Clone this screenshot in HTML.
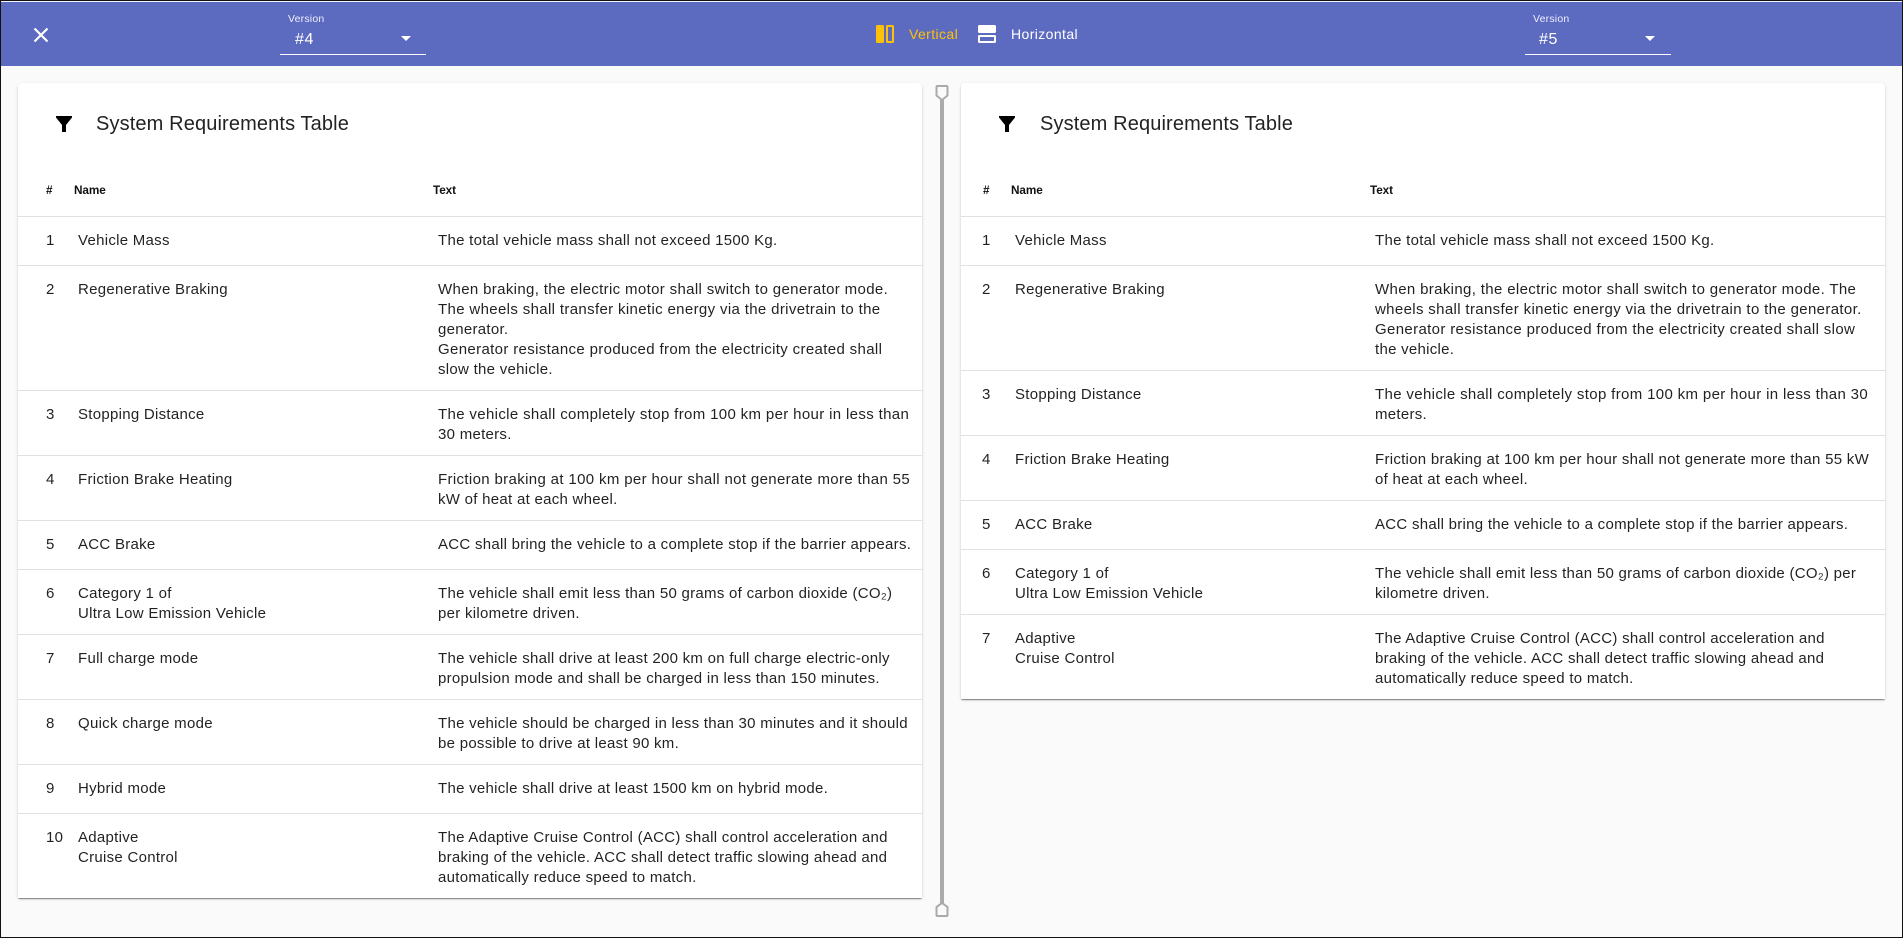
<!DOCTYPE html>
<html><head><meta charset="utf-8"><title>Compare</title>
<style>
*{box-sizing:border-box}
html,body{margin:0;padding:0}
body{width:1903px;height:938px;overflow:hidden;position:relative;background:#fafafa;font-family:"Liberation Sans",sans-serif;color:rgba(0,0,0,.87)}
.frame{position:absolute;left:0;top:0;width:1903px;height:938px;border:1px solid #111;z-index:9;pointer-events:none}
.bar{position:absolute;left:0;top:0;width:1903px;height:66px;background:#5c6bc0;color:#fff;border-top:2px solid #f4f5fb}
.bar>*{margin-top:-2px}
.abs{position:absolute;white-space:nowrap}
.lab{font-size:10.5px;line-height:12px;top:13px;letter-spacing:.2px;color:#eef}
.val{font-size:16px;line-height:20px;top:30px;letter-spacing:.6px}
.ul{position:absolute;top:54px;width:146px;height:1px;background:#fff}
.arr{position:absolute;top:36px;width:0;height:0;border-left:5px solid transparent;border-right:5px solid transparent;border-top:5px solid #fff}
.opt{font-size:14px;line-height:20px;top:24px;letter-spacing:.4px}
.card{position:absolute;top:83px;background:#fff;border-radius:4px 4px 0 0;box-shadow:0 2px 1px -1px rgba(0,0,0,.3),0 1px 1px 0 rgba(0,0,0,.2),0 1px 3px 0 rgba(0,0,0,.12)}
.title{position:absolute;top:28px;font-size:20px;line-height:26px;letter-spacing:.13px;white-space:nowrap;color:rgba(0,0,0,.87)}
.hd{position:absolute;top:100px;font-size:12px;line-height:14px;font-weight:700;color:#111;letter-spacing:-.1px;white-space:nowrap;transform:scaleX(.98);transform-origin:left}
.r{position:absolute;left:0;width:100%;border-bottom:1px solid #e0e0e0}
.c{position:absolute;top:14px;font-size:15px;line-height:20px;letter-spacing:.28px;white-space:nowrap}
.w{letter-spacing:.35px}
</style></head><body>
<div class="bar">
<svg class="abs" style="left:32px;top:26px" width="18" height="18" viewBox="0 0 18 18"><path d="M2.5 2.5L15.5 15.5M15.5 2.5L2.5 15.5" stroke="#fff" stroke-width="2.2" fill="none"/></svg>
<div class="abs lab" style="left:288px">Version</div>
<div class="abs val" style="left:295px">#4</div>
<div class="arr" style="left:401px"></div>
<div class="ul" style="left:280px"></div>
<svg class="abs" style="left:876px;top:25px" width="18" height="18" viewBox="0 0 18 18"><rect x="0" y="0" width="8" height="18" rx="1.5" fill="#ffc107"/><rect x="11" y="1" width="6" height="16" rx=".5" fill="none" stroke="#ffc107" stroke-width="2"/></svg>
<div class="abs opt" style="left:909px;color:#ffc107">Vertical</div>
<svg class="abs" style="left:978px;top:25px" width="18" height="18" viewBox="0 0 18 18"><rect x="0" y="0" width="18" height="8" rx="1.5" fill="#fff"/><rect x="1" y="11" width="16" height="6" rx=".5" fill="none" stroke="#fff" stroke-width="2"/></svg>
<div class="abs opt" style="left:1011px">Horizontal</div>
<div class="abs lab" style="left:1533px">Version</div>
<div class="abs val" style="left:1539px">#5</div>
<div class="arr" style="left:1645px"></div>
<div class="ul" style="left:1525px"></div>
</div>

<div class="card" style="left:18px;width:904px;height:815px">
<svg class="abs" style="left:38px;top:33px" width="16" height="16" viewBox="0 0 16 16"><path d="M0 0H16V1.5L10 9V16H6V9L0 1.5Z" fill="#000"/></svg>
<div class="title" style="left:78px">System Requirements Table</div>
<div class="hd" style="left:28px">#</div><div class="hd" style="left:56px">Name</div><div class="hd" style="left:415px">Text</div>
<div class="r" style="top:96px;height:38px"></div>
<div class="r" style="top:134px;height:49px"><div class="c" style="left:28px">1</div><div class="c" style="left:60px">Vehicle Mass</div><div class="c" style="left:420px">The total vehicle mass shall not exceed 1500 Kg.</div></div>
<div class="r" style="top:183px;height:125px"><div class="c" style="left:28px">2</div><div class="c" style="left:60px">Regenerative Braking</div><div class="c" style="left:420px"><span class="w">When braking, the electric motor shall switch to generator mode.</span><br><span class="w">The wheels shall transfer kinetic energy via the drivetrain to the</span><br>generator.<br><span class="w">Generator resistance produced from the electricity created shall</span><br>slow the vehicle.</div></div>
<div class="r" style="top:308px;height:65px"><div class="c" style="left:28px">3</div><div class="c" style="left:60px">Stopping Distance</div><div class="c" style="left:420px"><span class="w">The vehicle shall completely stop from 100 km per hour in less than</span><br>30 meters.</div></div>
<div class="r" style="top:373px;height:65px"><div class="c" style="left:28px">4</div><div class="c" style="left:60px">Friction Brake Heating</div><div class="c" style="left:420px"><span class="w">Friction braking at 100 km per hour shall not generate more than 55</span><br>kW of heat at each wheel.</div></div>
<div class="r" style="top:438px;height:49px"><div class="c" style="left:28px">5</div><div class="c" style="left:60px">ACC Brake</div><div class="c" style="left:420px">ACC shall bring the vehicle to a complete stop if the barrier appears.</div></div>
<div class="r" style="top:487px;height:65px"><div class="c" style="left:28px">6</div><div class="c" style="left:60px">Category 1 of<br>Ultra Low Emission Vehicle</div><div class="c" style="left:420px">The vehicle shall emit less than 50 grams of carbon dioxide (CO₂)<br>per kilometre driven.</div></div>
<div class="r" style="top:552px;height:65px"><div class="c" style="left:28px">7</div><div class="c" style="left:60px">Full charge mode</div><div class="c" style="left:420px">The vehicle shall drive at least 200 km on full charge electric-only<br>propulsion mode and shall be charged in less than 150 minutes.</div></div>
<div class="r" style="top:617px;height:65px"><div class="c" style="left:28px">8</div><div class="c" style="left:60px">Quick charge mode</div><div class="c" style="left:420px">The vehicle should be charged in less than 30 minutes and it should<br>be possible to drive at least 90 km.</div></div>
<div class="r" style="top:682px;height:49px"><div class="c" style="left:28px">9</div><div class="c" style="left:60px">Hybrid mode</div><div class="c" style="left:420px">The vehicle shall drive at least 1500 km on hybrid mode.</div></div>
<div class="r" style="top:731px;height:84px;border-bottom:0"><div class="c" style="left:28px">10</div><div class="c" style="left:60px">Adaptive<br>Cruise Control</div><div class="c" style="left:420px">The Adaptive Cruise Control (ACC) shall control acceleration and<br>braking of the vehicle. ACC shall detect traffic slowing ahead and<br>automatically reduce speed to match.</div></div>
</div>

<svg class="abs" style="left:934px;top:83px" width="16" height="836" viewBox="0 0 16 836"><rect x="6" y="17" width="4" height="803" fill="#aaa"/><path d="M2.5 4Q2.5 3 3.5 3H12.5Q13.5 3 13.5 4V12.5L8 17L2.5 12.5Z" fill="#fafafa" stroke="#aaa" stroke-width="2"/><path d="M2.5 832Q2.5 833 3.5 833H12.5Q13.5 833 13.5 832V824L8 820L2.5 824Z" fill="#fafafa" stroke="#aaa" stroke-width="2"/></svg>

<div class="card" style="left:961px;width:924px;height:616px">
<svg class="abs" style="left:38px;top:33px" width="16" height="16" viewBox="0 0 16 16"><path d="M0 0H16V1.5L10 9V16H6V9L0 1.5Z" fill="#000"/></svg>
<div class="title" style="left:79px">System Requirements Table</div>
<div class="hd" style="left:22px">#</div><div class="hd" style="left:50px">Name</div><div class="hd" style="left:409px">Text</div>
<div class="r" style="top:96px;height:38px"></div>
<div class="r" style="top:134px;height:49px"><div class="c" style="left:21px">1</div><div class="c" style="left:54px">Vehicle Mass</div><div class="c" style="left:414px">The total vehicle mass shall not exceed 1500 Kg.</div></div>
<div class="r" style="top:183px;height:105px"><div class="c" style="left:21px">2</div><div class="c" style="left:54px">Regenerative Braking</div><div class="c" style="left:414px"><span class="w">When braking, the electric motor shall switch to generator mode. The</span><br><span class="w">wheels shall transfer kinetic energy via the drivetrain to the generator.</span><br><span class="w">Generator resistance produced from the electricity created shall slow</span><br>the vehicle.</div></div>
<div class="r" style="top:288px;height:65px"><div class="c" style="left:21px">3</div><div class="c" style="left:54px">Stopping Distance</div><div class="c" style="left:414px"><span class="w">The vehicle shall completely stop from 100 km per hour in less than 30</span><br>meters.</div></div>
<div class="r" style="top:353px;height:65px"><div class="c" style="left:21px">4</div><div class="c" style="left:54px">Friction Brake Heating</div><div class="c" style="left:414px">Friction braking at 100 km per hour shall not generate more than 55 kW<br>of heat at each wheel.</div></div>
<div class="r" style="top:418px;height:49px"><div class="c" style="left:21px">5</div><div class="c" style="left:54px">ACC Brake</div><div class="c" style="left:414px">ACC shall bring the vehicle to a complete stop if the barrier appears.</div></div>
<div class="r" style="top:467px;height:65px"><div class="c" style="left:21px">6</div><div class="c" style="left:54px">Category 1 of<br>Ultra Low Emission Vehicle</div><div class="c" style="left:414px">The vehicle shall emit less than 50 grams of carbon dioxide (CO₂) per<br>kilometre driven.</div></div>
<div class="r" style="top:532px;height:84px;border-bottom:0"><div class="c" style="left:21px">7</div><div class="c" style="left:54px">Adaptive<br>Cruise Control</div><div class="c" style="left:414px">The Adaptive Cruise Control (ACC) shall control acceleration and<br>braking of the vehicle. ACC shall detect traffic slowing ahead and<br>automatically reduce speed to match.</div></div>
</div>
<div class="frame"></div>
</body></html>
